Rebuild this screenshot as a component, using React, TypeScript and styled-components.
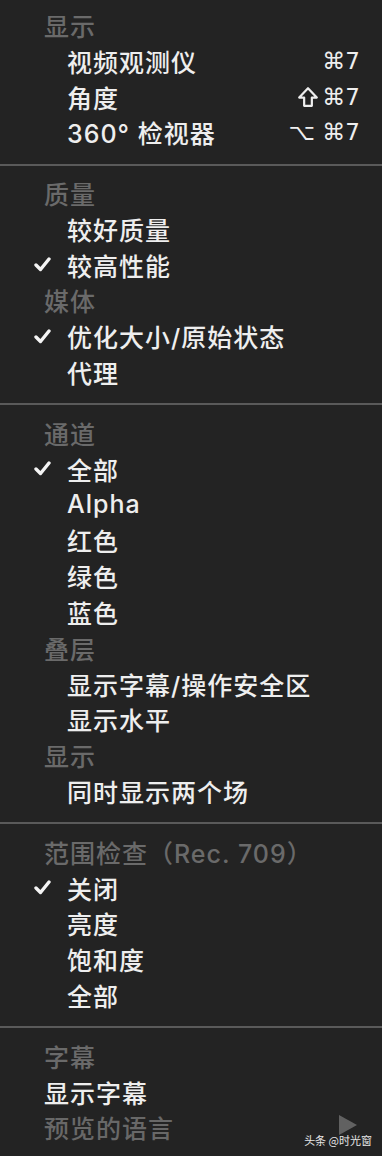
import React from "react";
import styled, { createGlobalStyle } from "styled-components";

const GlobalStyle = createGlobalStyle`
  html, body {
    margin: 0;
    padding: 0;
    background: #222222;
  }
  * {
    box-sizing: border-box;
  }
`;

const Menu = styled.div`
  position: relative;
  width: 382px;
  height: 1156px;
  padding-top: 7px;
  background: #232323;
  font-family: Inter, "Noto Sans CJK SC", sans-serif;
  font-size: 25px;
  font-weight: 500;
  letter-spacing: 1px;
  overflow: hidden;
`;

const Section = styled.div`
  display: flex;
  flex-direction: column;
`;

const Separator = styled.div`
  height: 25px;
  padding-top: 4px;
  display: flex;
  align-items: center;

  &::after {
    content: "";
    display: block;
    width: 100%;
    height: 2px;
    background: #5a5a5a;
  }
`;

const Header = styled.div`
  height: 35.8px;
  display: flex;
  align-items: center;
  padding-left: 44px;
  color: #6a6a6a;
`;

const Item = styled.div<{ $flat?: boolean; $dim?: boolean }>`
  height: 35.8px;
  display: grid;
  grid-template-columns: ${(p) => (p.$flat ? "44px" : "67px")} 1fr auto;
  align-items: center;
  padding-right: 22px;
  color: ${(p) => (p.$dim ? "#686868" : "#eeeeee")};
`;

const CheckCell = styled.span`
  display: flex;
  justify-content: flex-end;
  padding-right: 16px;
`;

const Label = styled.span`
  white-space: nowrap;
`;

const Shortcut = styled.span`
  display: flex;
  align-items: center;
  gap: 3px;
  font-family: "DejaVu Sans", sans-serif;
  font-size: 23px;
  font-weight: 400;
  letter-spacing: 0;
  color: #eeeeee;
`;

const Watermark = styled.div`
  position: absolute;
  right: 10px;
  bottom: 8px;
  display: flex;
  flex-direction: column;
  align-items: flex-end;
  font-family: "Noto Sans CJK SC", sans-serif;
  font-size: 11px;
  font-weight: 400;
  letter-spacing: 0;
  color: #e6e6e6;
`;

const PlayMark = styled.svg`
  margin-right: 14px;
  margin-bottom: -4px;
`;

function Check() {
  return (
    <svg width="17" height="15" viewBox="0 0 17 15">
      <path
        d="M2 8 L6.5 12.5 L15 2"
        fill="none"
        stroke="#f4f4f4"
        strokeWidth="3.4"
        strokeLinecap="round"
        strokeLinejoin="round"
      />
    </svg>
  );
}

function ShiftKey() {
  return (
    <svg width="22" height="22" viewBox="0 0 20 20">
      <path
        d="M10 2 L18 10.5 L13.5 10.5 L13.5 18 L6.5 18 L6.5 10.5 L2 10.5 Z"
        fill="none"
        stroke="#eeeeee"
        strokeWidth="2"
        strokeLinejoin="round"
      />
    </svg>
  );
}

type Row =
  | { kind: "header"; text: string }
  | {
      kind: "item";
      text: string;
      checked?: boolean;
      shortcut?: React.ReactNode;
      flat?: boolean;
      dim?: boolean;
    };

const sections: Row[][] = [
  [
    { kind: "header", text: "显示" },
    { kind: "item", text: "视频观测仪", shortcut: <span>⌘7</span> },
    {
      kind: "item",
      text: "角度",
      shortcut: (
        <>
          <ShiftKey />
          <span>⌘7</span>
        </>
      ),
    },
    { kind: "item", text: "360° 检视器", shortcut: <span>⌥ ⌘7</span> },
  ],
  [
    { kind: "header", text: "质量" },
    { kind: "item", text: "较好质量" },
    { kind: "item", text: "较高性能", checked: true },
    { kind: "header", text: "媒体" },
    { kind: "item", text: "优化大小/原始状态", checked: true },
    { kind: "item", text: "代理" },
  ],
  [
    { kind: "header", text: "通道" },
    { kind: "item", text: "全部", checked: true },
    { kind: "item", text: "Alpha" },
    { kind: "item", text: "红色" },
    { kind: "item", text: "绿色" },
    { kind: "item", text: "蓝色" },
    { kind: "header", text: "叠层" },
    { kind: "item", text: "显示字幕/操作安全区" },
    { kind: "item", text: "显示水平" },
    { kind: "header", text: "显示" },
    { kind: "item", text: "同时显示两个场" },
  ],
  [
    { kind: "header", text: "范围检查（Rec. 709）" },
    { kind: "item", text: "关闭", checked: true },
    { kind: "item", text: "亮度" },
    { kind: "item", text: "饱和度" },
    { kind: "item", text: "全部" },
  ],
  [
    { kind: "header", text: "字幕" },
    { kind: "item", text: "显示字幕", flat: true },
    { kind: "item", text: "预览的语言", flat: true, dim: true },
  ],
];

export default function App() {
  return (
    <>
      <GlobalStyle />
      <Menu>
        {sections.map((rows, si) => (
          <React.Fragment key={si}>
            {si > 0 && <Separator />}
            <Section>
              {rows.map((row, ri) =>
                row.kind === "header" ? (
                  <Header key={ri}>{row.text}</Header>
                ) : (
                  <Item key={ri} $flat={row.flat} $dim={row.dim}>
                    <CheckCell>{row.checked && <Check />}</CheckCell>
                    <Label>{row.text}</Label>
                    {row.shortcut ? <Shortcut>{row.shortcut}</Shortcut> : <span />}
                  </Item>
                )
              )}
            </Section>
          </React.Fragment>
        ))}
        <Watermark>
          <PlayMark width="20" height="22" viewBox="0 0 20 22">
            <path d="M1 1 L19 11 L1 21 Z" fill="rgba(150,150,150,0.55)" />
          </PlayMark>
          <span>头条 @时光窗</span>
        </Watermark>
      </Menu>
    </>
  );
}
